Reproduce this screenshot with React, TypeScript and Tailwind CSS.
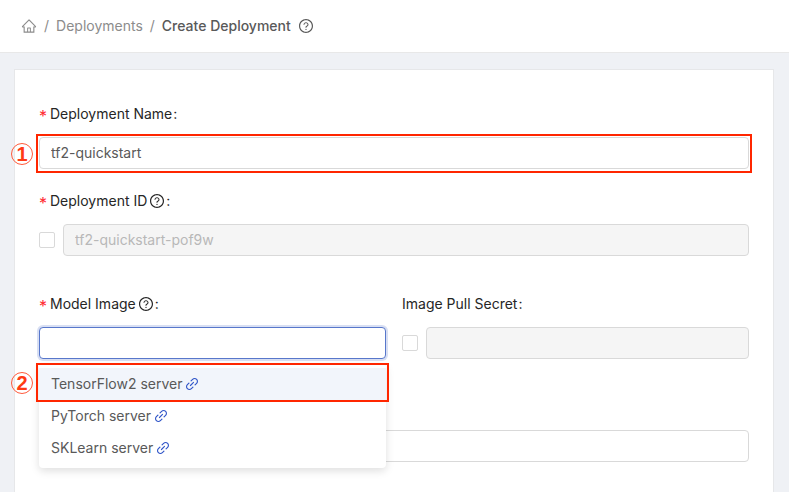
import type { ReactNode } from "react";
import { AiOutlineHome, AiOutlineLink, AiOutlineQuestionCircle } from "react-icons/ai";

const servers = ["TensorFlow2 server", "PyTorch server", "SKLearn server"];

function FieldLabel({
  htmlFor,
  required,
  help,
  children,
}: {
  htmlFor: string;
  required?: boolean;
  help?: boolean;
  children: ReactNode;
}) {
  return (
    <label htmlFor={htmlFor} className="mb-3 flex h-[22px] items-center text-[#262626]">
      {required && <span className="mr-[3px] w-2 pt-1 text-base text-[#ff2a30]">*</span>}
      <span>{children}</span>
      {help && <AiOutlineQuestionCircle className="ml-[2px] size-4" />}
      <span className="ml-px">:</span>
    </label>
  );
}

function Marker({ children }: { children: ReactNode }) {
  return (
    <span className="absolute top-1/2 right-full mr-[5px] flex size-[22px] -translate-y-1/2 items-center justify-center rounded-full border border-[#ff5a3c] font-['Liberation_Sans',sans-serif] text-xl leading-5 font-bold text-[#ff3a14]">
      {children}
    </span>
  );
}

function Toggle({ label }: { label: string }) {
  return (
    <input
      type="checkbox"
      aria-label={label}
      className="size-4 shrink-0 appearance-none rounded-xs border border-[#d9d9d9] bg-white"
    />
  );
}

const field = "h-8 w-full min-w-0 rounded-sm border border-[#d9d9d9] px-[11px] pb-[2px] outline-none";

export default function App() {
  return (
    <div className="flex min-h-screen flex-col bg-[#eff1f5] font-[Inter,sans-serif] text-sm leading-[22px] text-[#595959]">
      <header className="flex h-[53px] items-center border-b border-[#e8e8e8] bg-white px-[21px]">
        <nav aria-label="Breadcrumb" className="flex items-center gap-[7px] text-[#8c8c8c]">
          <a href="#home" aria-label="Home">
            <AiOutlineHome className="size-4" />
          </a>
          <span>/</span>
          <a href="#deployments">Deployments</a>
          <span>/</span>
          <span className="font-medium text-[#595959]">Create Deployment</span>
          <AiOutlineQuestionCircle className="size-4 text-[#595959]" />
        </nav>
      </header>

      <main className="flex flex-1 flex-col pt-4 pr-[15px] pl-[14px]">
        <form className="flex-1 border border-b-0 border-[#e6e7e9] bg-white px-6 pt-[33px] pb-6">
          <div className="mb-[21px]">
            <FieldLabel htmlFor="name" required>
              Deployment Name
            </FieldLabel>
            <div className="relative flex">
              <input id="name" defaultValue="tf2-quickstart" className={`${field} bg-white`} />
              <div className="pointer-events-none absolute -inset-x-[3px] -top-[3px] -bottom-1 border-2 border-[#ff2600]">
                <Marker>1</Marker>
              </div>
            </div>
          </div>

          <div className="mb-[37px]">
            <FieldLabel htmlFor="deployment-id" required help>
              Deployment ID
            </FieldLabel>
            <div className="flex items-center gap-2">
              <Toggle label="Edit deployment ID" />
              <input
                id="deployment-id"
                disabled
                defaultValue="tf2-quickstart-pof9w"
                className={`${field} bg-[#f5f5f5] text-[#b8b8b8]`}
              />
            </div>
          </div>

          <div className="mb-[71px] grid grid-cols-2 gap-4">
            <div>
              <FieldLabel htmlFor="model-image" required help>
                Model Image
              </FieldLabel>
              <div className="relative flex">
                <input
                  id="model-image"
                  role="combobox"
                  aria-expanded="true"
                  aria-controls="server-list"
                  className="h-8 w-full min-w-0 rounded-sm border border-[#5877cb] bg-white px-[11px] ring-2 ring-[#d8dff3] outline-none"
                />
                <ul
                  id="server-list"
                  role="listbox"
                  className="absolute inset-x-0 top-full z-10 mt-[5px] rounded-sm bg-white py-1 shadow-[0_3px_8px_rgba(0,0,0,0.13)]"
                >
                  {servers.map((server, i) => (
                    <li
                      key={server}
                      role="option"
                      aria-selected={i === 0}
                      className="relative flex h-8 items-center gap-[2px] px-3 aria-selected:bg-[#f2f5fb]"
                    >
                      <span>{server}</span>
                      <a href="#server" aria-label={`${server} link`} className="text-[#2f54c8]">
                        <AiOutlineLink className="size-4" />
                      </a>
                      {i === 0 && (
                        <div className="pointer-events-none absolute -inset-x-[3px] -top-[5px] -bottom-[2px] border-2 border-[#ff2600]">
                          <Marker>2</Marker>
                        </div>
                      )}
                    </li>
                  ))}
                </ul>
              </div>
            </div>
            <div>
              <FieldLabel htmlFor="pull-secret">Image Pull Secret</FieldLabel>
              <div className="flex items-center gap-2">
                <Toggle label="Use image pull secret" />
                <input id="pull-secret" disabled className={`${field} bg-[#f5f5f5]`} />
              </div>
            </div>
          </div>

          <input aria-label="Description" className={`${field} block bg-white`} />
        </form>
      </main>
    </div>
  );
}
